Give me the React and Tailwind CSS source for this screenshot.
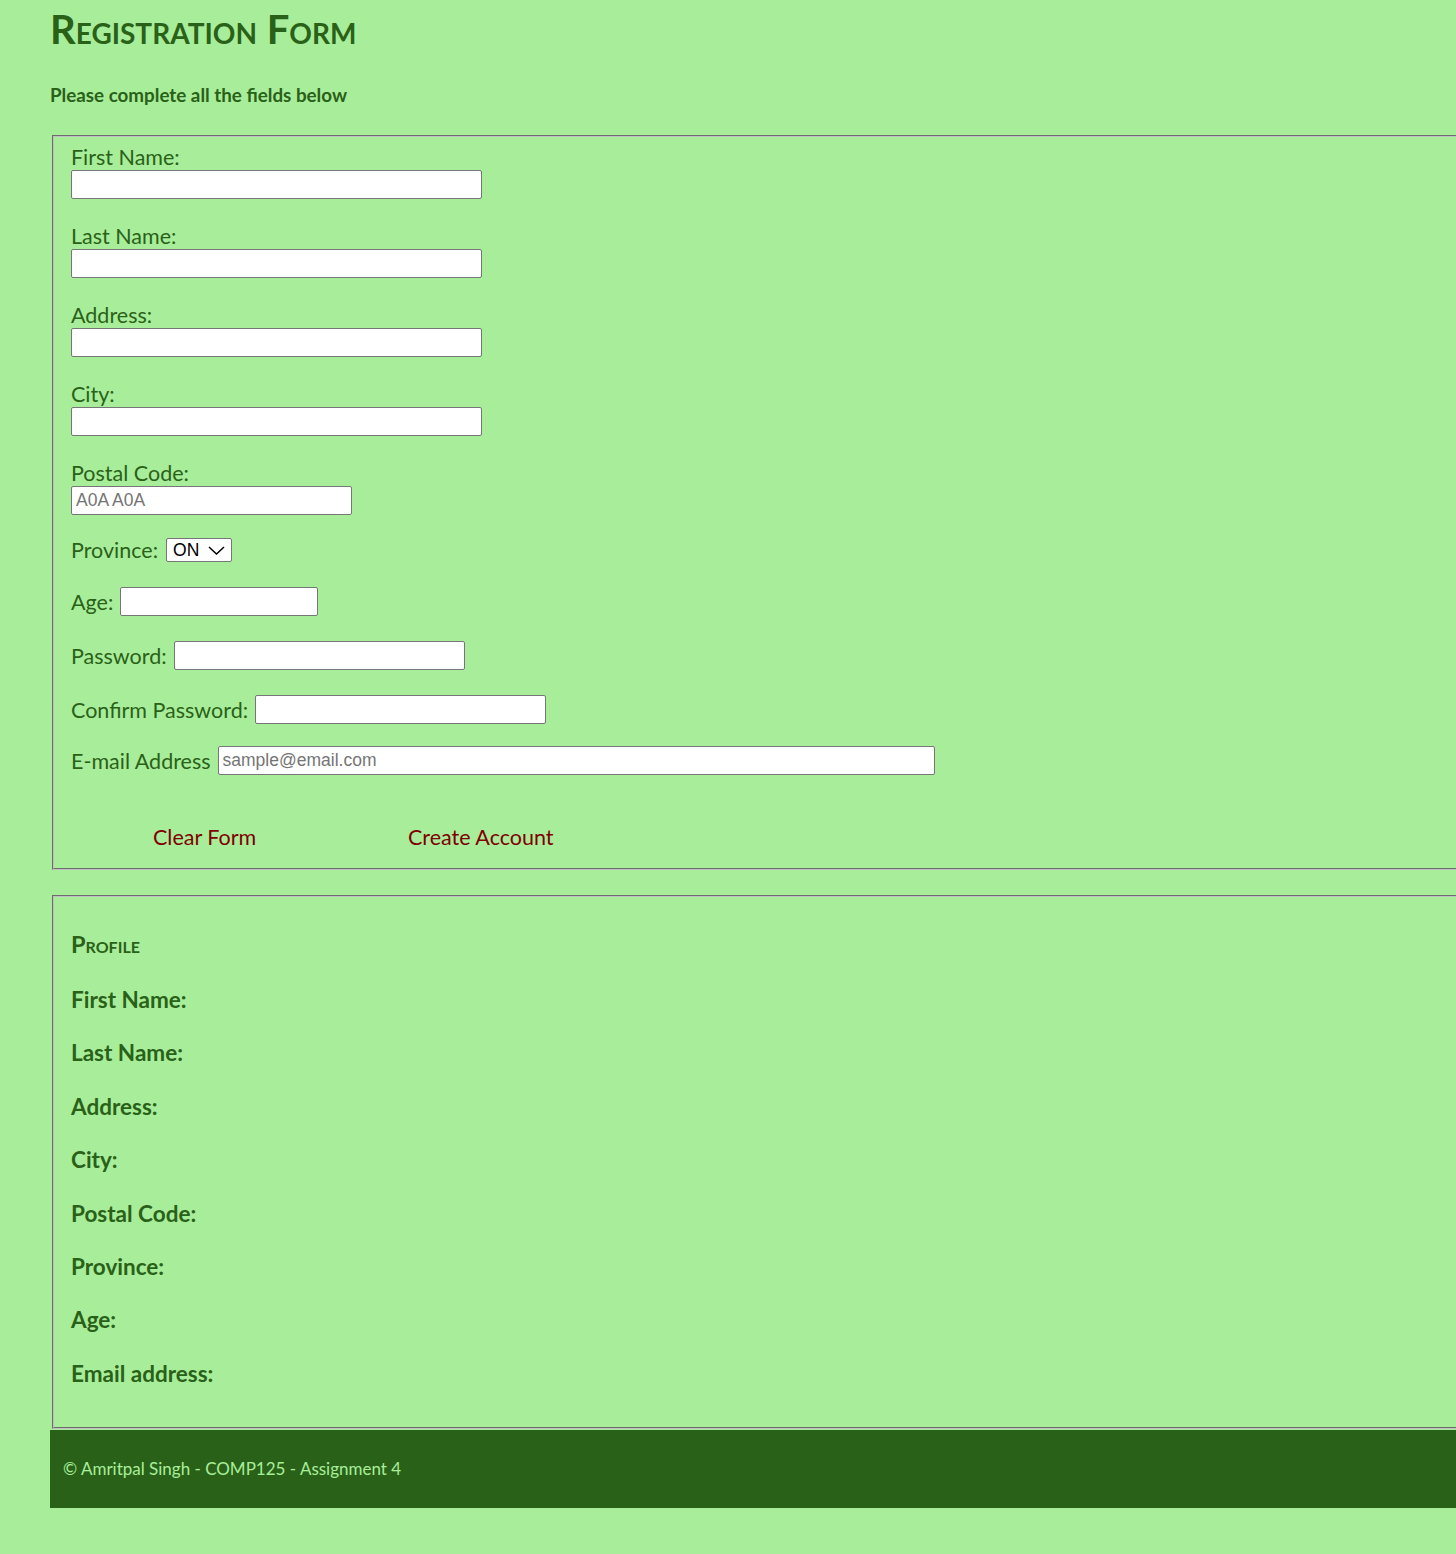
import React, { useState } from 'react';

const FONT = "font-['Lato','Noto_Sans',sans-serif]";
const INPUT = "h-[29px] bg-white border border-[#767676] rounded-[2px] px-[4px] font-['Liberation_Sans',Arial,sans-serif] text-[17.5px] text-black placeholder:text-[#757575] outline-none";

function StackField({ label, width, placeholder, value, onChange, first }) {
  return (
    <div className={first ? '' : 'mt-[25px]'}>
      <label className="block leading-[24px]">{label}</label>
      <input
        type="text"
        value={value}
        onChange={onChange}
        placeholder={placeholder}
        className={`${INPUT} mt-[1px] block`}
        style={{ width }}
      />
    </div>
  );
}

function InlineField({ label, width, type = 'text', placeholder, mt, value, onChange }) {
  return (
    <div className={`flex items-center h-[29px] gap-[7px] ${mt}`}>
      <label className="leading-[24px] whitespace-nowrap">{label}</label>
      <input
        type={type}
        value={value}
        onChange={onChange}
        placeholder={placeholder}
        className={INPUT}
        style={{ width }}
      />
    </div>
  );
}

const PROFILE = ['First Name:', 'Last Name:', 'Address:', 'City:', 'Postal Code:', 'Province:', 'Age:', 'Email address:'];

export default function App() {
  const empty = { first: '', last: '', address: '', city: '', postal: '', province: 'ON', age: '', pw: '', pw2: '', email: '' };
  const [form, setForm] = useState(empty);
  const set = (k) => (e) => setForm({ ...form, [k]: e.target.value });

  return (
    <div className={`min-h-[1554px] bg-[#a8ee9a] text-[#2a6118] ${FONT} text-[21.5px] leading-[24px]`}>
      {/* Header */}
      <div className="pl-[50px] pt-[4px]">
        <h1 className="text-[40px] leading-[50px] font-bold [font-variant:small-caps]">Registration Form</h1>
        <p className="mt-[30px] text-[18.8px] leading-[22px] font-bold">Please complete all the fields below</p>
      </div>

      {/* Registration fieldset */}
      <div className="ml-[52px] mt-[29px] border-2 border-r-0 [border-style:groove] border-[#c0c0c0] pl-[17px] pt-[8px] pb-[19px]">
        <StackField first label="First Name:" width={411} value={form.first} onChange={set('first')} />
        <StackField label="Last Name:" width={411} value={form.last} onChange={set('last')} />
        <StackField label="Address:" width={411} value={form.address} onChange={set('address')} />
        <StackField label="City:" width={411} value={form.city} onChange={set('city')} />
        <StackField label="Postal Code:" width={281} placeholder="A0A A0A" value={form.postal} onChange={set('postal')} />

        <div className="flex items-center h-[29px] gap-[8px] mt-[20px]">
          <label>Province:</label>
          <div className="relative w-[66px] h-[24px]">
            <select
              value={form.province}
              onChange={set('province')}
              className="block appearance-none w-full h-full bg-white border border-[#767676] rounded-[2px] pl-[6px] font-['Liberation_Sans',Arial,sans-serif] text-[17.5px] leading-[22px] text-black outline-none"
            >
              {['AB', 'BC', 'MB', 'NB', 'NL', 'NS', 'ON', 'PE', 'QC', 'SK'].map((p) => (
                <option key={p} value={p}>{p}</option>
              ))}
            </select>
            <svg className="absolute right-[7px] top-[8px] pointer-events-none" width="17" height="9" viewBox="0 0 17 9" fill="none">
              <path d="M1 1L8.5 8L16 1" stroke="#000" strokeWidth="1.5" />
            </svg>
          </div>
        </div>

        <InlineField label="Age:" width={198} mt="mt-[23px]" value={form.age} onChange={set('age')} />
        <InlineField label="Password:" type="password" width={291} mt="mt-[25px]" value={form.pw} onChange={set('pw')} />
        <InlineField label="Confirm Password:" type="password" width={291} mt="mt-[25px]" value={form.pw2} onChange={set('pw2')} />
        <InlineField label="E-mail Address" width={717} placeholder="sample@email.com" mt="mt-[22px]" value={form.email} onChange={set('email')} />

        <div className="flex mt-[50px] pl-[82px] text-[#800000]">
          <button type="button" onClick={() => setForm(empty)} className="w-[255px] text-left cursor-pointer">Clear Form</button>
          <button type="button" className="text-left cursor-pointer">Create Account</button>
        </div>
      </div>

      {/* Profile fieldset */}
      <div className="ml-[52px] mt-[25px] border-2 border-r-0 [border-style:groove] border-[#c0c0c0] pl-[17px] pt-[35px] pb-[41px] font-bold">
        <h2 className="text-[23.5px] leading-[24px] [font-variant:small-caps]">Profile</h2>
        <div className="flex flex-col gap-[29.4px] mt-[32px] text-[22.5px]">
          {PROFILE.map((l) => (
            <p key={l}>{l}</p>
          ))}
        </div>
      </div>

      {/* Footer */}
      <footer className="ml-[50px] mt-[1px] h-[78px] bg-[#2a6118] flex items-center pl-[13px] text-[17px] text-[#a8ee9a]">
        © Amritpal Singh - COMP125 - Assignment 4
      </footer>
    </div>
  );
}
